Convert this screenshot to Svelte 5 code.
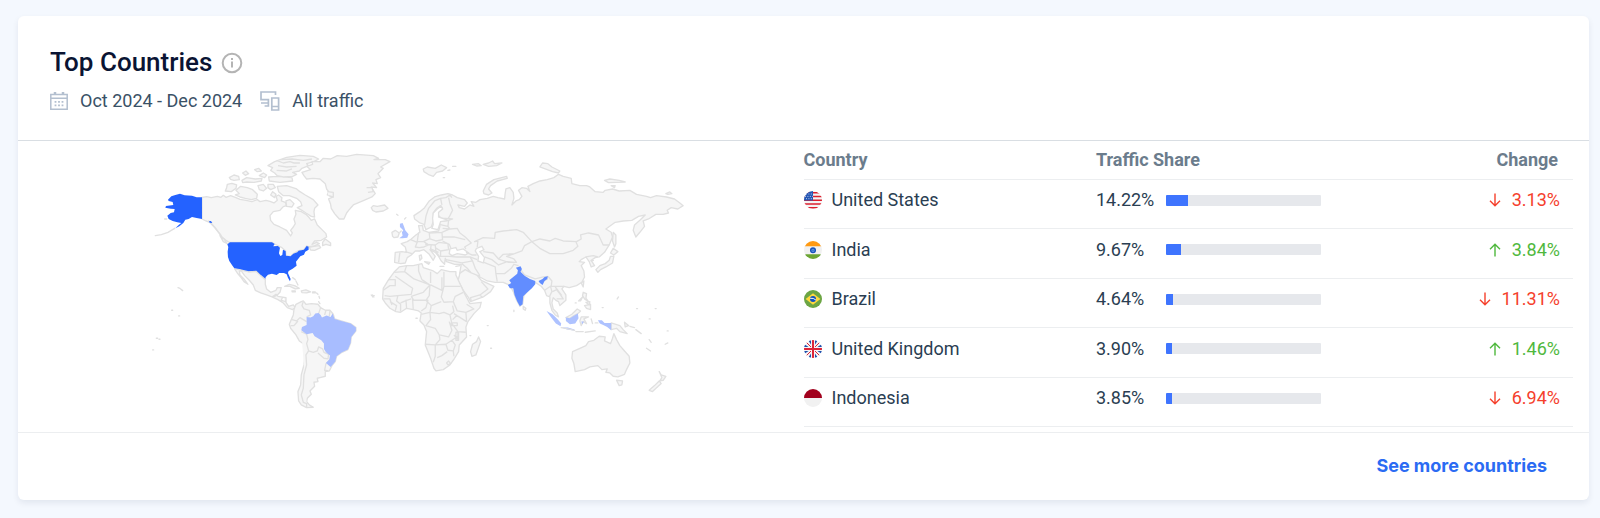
<script lang="ts">
  type Country = {
    code: string
    name: string
    share: number
    change: number
    isUp: boolean
  }

  let {
    period = 'Oct 2024 - Dec 2024',
    source = 'All traffic'
  }: {
    period?: string
    source?: string
  } = $props()

  const countries: Country[] = [
    { code: 'us', name: 'United States', share: 14.22, change: 3.13, isUp: false },
    { code: 'in', name: 'India', share: 9.67, change: 3.84, isUp: true },
    { code: 'br', name: 'Brazil', share: 4.64, change: 11.31, isUp: false },
    { code: 'gb', name: 'United Kingdom', share: 3.9, change: 1.46, isUp: true },
    { code: 'id', name: 'Indonesia', share: 3.85, change: 6.94, isUp: false }
  ]
</script>

{#snippet flag(code: string)}
  <svg class="flag" viewBox="0 0 18 18" aria-hidden="true">
    <g clip-path="url(#flag-clip)">
      {#if code === 'us'}
        <path fill="#f4f4f4" d="M0 0h18v18H0z" />
        <path stroke="#dc1f2e" stroke-width="1.5" d="M0 1.8h18M0 5.4h18M0 9.2h18M0 12.9h18M0 16.8h18" />
        <path fill="#2456b4" d="M0 0h9v9.5H0z" />
        <path stroke="#c9d8f2" stroke-width="0.9" stroke-dasharray="1 1.4" d="M2 3h7M1 5.4h8M2 7.7h7" />
      {:else if code === 'in'}
        <path fill="#f1f1f1" d="M0 0h18v18H0z" />
        <path fill="#ff9a13" d="M0 0h18v5.3H0z" />
        <path fill="#6ca534" d="M0 13.2h18V18H0z" />
        <circle cx="9" cy="9.2" r="2.3" fill="#6ba0e8" stroke="#1753bb" stroke-width="1.5" />
        <circle cx="9" cy="9.2" r="0.7" fill="#1753bb" />
      {:else if code === 'br'}
        <path fill="#6ca544" d="M0 0h18v18H0z" />
        <path fill="#ffd83d" d="M9 3.2 16.4 9 9 14.8 1.6 9z" />
        <circle cx="9" cy="9" r="3" fill="#0f52ba" />
        <path fill="none" stroke="#f4f4f4" d="M6.1 8.3q3.3-.6 5.8 1.7" />
      {:else if code === 'gb'}
        <path fill="#f4f4f4" d="M0 0h18v18H0z" />
        <path fill="#1d4fae" d="M4 0h3v4.6zM0 4v3h4.6zM11 0h3l-3 4.6zM18 4v3h-4.6zM0 11h4.6L0 14zM7 18H4l3-4.6zM18 11h-4.6l4.6 3zM11 18h3l-3-4.6z" />
        <path stroke="#dc2438" d="m2 2 5 5M16 2l-5 5M2 16l5-5M16 16l-5-5" />
        <path stroke="#dc2438" stroke-width="2" d="M9 0v18M0 9h18" />
      {:else}
        <path fill="#f1f1f1" d="M0 0h18v18H0z" />
        <path fill="#a2001d" d="M0 0h18v9H0z" />
      {/if}
    </g>
  </svg>
{/snippet}

<section class="card">
  <svg class="defs" aria-hidden="true">
    <clipPath id="flag-clip"><circle cx="9" cy="9" r="9" /></clipPath>
  </svg>

  <header class="card-header">
    <div class="title-row">
      <h2>Top Countries</h2>
      <button class="info" type="button" aria-label="About top countries">
        <svg viewBox="0 0 22 22" fill="none" stroke="#b4b4b4" stroke-width="2">
          <circle cx="11" cy="11" r="9.3" />
          <path d="M11 9.5v6M11 6v2" />
        </svg>
      </button>
    </div>
    <div class="meta">
      <svg class="meta-icon calendar" viewBox="0 0 18 18" fill="none" stroke="#b3bfcf" stroke-width="1.5">
        <path d="M.8 2.5h16.4v14.7H.8zM.8 6.2h16.4" />
        <path stroke-width="2.5" d="M5 0v3M13 0v3" />
        <path stroke-width="1.8" stroke-dasharray="1.8 1.7" d="M4.6 9.8h9M4.6 13.4h9" />
      </svg>
      <span>{period}</span>
      <svg class="meta-icon devices" viewBox="0 0 20 20" fill="none" stroke="#b3bfcf" stroke-width="1.7">
        <path d="M15.5 4V1H1v7.6h7.4V15H4.6M1 12h7.4" />
        <path d="M11.8 7h6.8v12h-6.8zM11.8 15.5h6.8" />
      </svg>
      <span>{source}</span>
    </div>
  </header>

  <div class="card-body">
    <div class="map-pane">
      <svg class="map" viewBox="0 0 1650 810" role="img" aria-label="World map of traffic share">
        <!-- North America -->
        <g>
          <path class="land" d="M186 157 200 155 214 158 232 154 243 157 250 151 258 157 272 152 288 158 300 163 318 166 336 170 352 164 360 170 378 166 390 169 402 174 412 166 408 154 416 150 426 158 424 168 436 172 440 182 430 185 420 196 400 200 390 212 392 226 402 238 420 246 440 256 452 273 457 264 452 256 460 246 466 236 462 222 468 208 466 196 484 200 498 208 506 216 514 226 524 222 532 240 546 254 558 266 560 276 544 286 524 288 516 298 530 292 538 296 524 303 506 305 500 303 492 314 476 317 460 326 452 334 438 332 437 318 426 308 404 297 396 292 268 292 258 286 246 276 236 262 224 246 212 234 198 228 186 222Z" />
          <path class="land" d="M262 118 276 115 290 120 288 130 274 140 256 138 260 128ZM288 136 302 124 322 128 338 134 352 148 350 160 334 164 316 160 300 156 286 150 298 146ZM412 124 440 122 470 132 480 140 496 150 520 164 534 180 524 190 522 200 524 216 514 214 498 204 486 196 472 188 486 182 482 170 470 160 448 152 430 152 416 140ZM384 62 404 50 440 37 480 31 520 34 536 42 522 50 500 56 506 62 486 70 478 78 458 82 470 88 458 94 430 96 412 92 404 84 392 76 398 68ZM386 96 410 94 456 98 458 108 420 112 388 108ZM268 98 282 90 296 94 298 104 282 106 272 103ZM308 84 318 78 326 86 316 91ZM344 74 356 70 364 78 352 80ZM306 106 320 98 346 102 366 100 364 108 342 112 320 111 308 113ZM358 92 370 84 380 90 374 98ZM354 122 370 118 380 130 370 138 358 134ZM384 118 400 118 406 128 392 134 384 128ZM392 150 398 140 408 148 404 158ZM438 168 450 164 462 176 456 186 440 184Z" />
          <path class="land" d="M410 46 430 54 450 50 462 54 480 54M414 62 440 66 470 64M410 76 440 78 456 72M424 44 456 42 490 46 516 42" />
          <path class="land" d="M486 82 512 74 500 64 518 58 516 50 540 50 550 40 572 42 592 32 620 34 650 28 700 32 716 40 702 44 736 44 750 50 722 66 730 70 714 86 722 98 708 104 712 116 698 114 710 128 694 126 706 146 696 156 672 166 640 180 626 196 620 204 612 222 598 222 584 206 574 190 572 178 566 162 580 156 562 150 566 140 560 132 556 116 540 102 520 100 500 102 492 92Z" />
          <path class="land" d="M562 140 580 142 580 156 566 152M680 128 696 128 700 140 684 142" />
          <path class="land" d="M694 188 700 182 712 184 734 180 744 190 730 198 708 201 698 196ZM548 292 556 282 572 294 572 302 558 298 548 302ZM508 307 522 304 538 302 542 308 524 316 512 315ZM240 272 252 282 262 296 250 290Z" />
          <path class="islands" d="M104 250 84 262 64 269 46 272M206 228l20 22 16 20M74 222h6" />
          <path class="us" d="M84 164 94 154 106 150 120 146 134 151 156 152 170 157 186 157 186 222 170 219 156 216 146 222 136 224 130 234 118 244 106 250 116 240 124 234 112 232 98 228 86 222 82 212 92 204 102 202 104 192 92 191 76 188 78 183 100 180 98 171 86 168ZM207 229 213 228 217 234 209 233Z" />
          <path class="us" d="M270 292H396L404 297 400 304 414 303 420 308 417 325 421 333 427 330 429 314 437 318 438 332 452 334 460 326 472 322 476 317 492 314 500 303 506 305 506 314 496 320 492 329 481 334 474 343 468 350 470 362 458 371 446 378 444 384 452 402 450 409 444 398 440 388 432 384 418 384 410 390 396 386 384 389 377 397 376 403 368 400 362 391 352 384 348 378 336 378 326 380 308 377 298 373 284 371 276 360 268 348 264 336 263 320 265 306 262 298Z" />
        </g>

        <!-- Central and South America -->
        <g transform="translate(0 390)">
          <path class="land" d="M284-18 298-16 326-9 348-11 362 2 376 14 376 28 380 42 392 52 408 46 412 38 424 38 420 52 412 60 404 64 396 66 380 60 362 54 346 46 340 30 328 16 314 2 304-12 298-12 300 0 312 12 324 28 312 20 302 6 292-6ZM396 66 408 58 414 64 438 68 438 82 446 94 460 90 466 98 458 104 442 98 430 84 414 74ZM428 66 424 76 438 80" />
          <path class="land" d="M434 34 448 28 464 32 478 40 466 42 450 34ZM484 48 498 45 512 51 500 54 486 53ZM456 48h10v3h-9ZM518 51h8v3h-8Z" />
          <path class="land" d="M468 88 484 80 490 78 498 88 514 86 534 88 542 98 556 106 570 106 580 118 584 132 604 138 632 146 648 158 648 168 634 186 632 204 624 224 606 232 590 244 586 260 576 272 568 288 556 290 556 304 540 308 532 310 534 320 522 322 524 334 510 348 514 358 502 370 500 380 508 390 520 397 500 398 484 390 476 378 474 350 482 330 484 300 492 270 496 236 496 210 478 198 468 180 452 160 448 148 454 134 460 120 462 104Z" />
          <path class="land" d="M490 80 486 92 492 102 508 106 512 120 500 126M542 98 538 110 536 116M558 106 554 120M570 108 568 124M456 134 470 138 480 128 500 140M452 152 462 152 474 138M484 170 500 178 504 194 500 206 506 228 498 240 500 270 492 300 490 340 484 360 490 382 500 386M506 228 520 232 532 228 536 216 548 222 552 232 566 238 564 252 552 250 534 234M570 254 558 266 554 286 566 288M500 384V396" />
          <path class="br" d="M500 126 512 128 520 124 526 116 536 114 542 120 546 128 560 122 572 126 578 116 584 132 604 138 632 146 648 158 648 168 634 186 632 204 624 224 606 232 590 244 586 260 572 276 558 264 568 254 570 242 558 232 552 222 552 206 544 196 524 184 518 174 500 178 484 166 486 156 500 150Z" />
          <path class="islands" d="M114 38l6 2M122 42l6 5M95 106h3M116 123h3M49 190h4M57 193h3M38 225h3M458 8l8 6M468 18l6 12M530 54l4 4M537 64l2 6M536 80l4 6M695 62h8M698 60v6" />
        </g>

        <!-- Europe and Asia -->
        <g transform="translate(690 0)">
          <path class="land" d="M134 222 132 212 150 200 164 188 178 168 194 156 214 150 234 146 248 150 262 158 284 164 292 174 284 184 264 180 268 188 284 192 300 180 312 184 304 170 318 172 330 164 352 160 370 154 384 158 404 162 406 144 408 132 420 128 430 142 432 160 426 180 438 168 448 164 456 154 446 136 456 128 470 130 480 140 474 124 490 116 510 108 532 104 552 98 566 88 580 94 604 100 606 116 630 122 650 122 660 126 676 140 700 142 706 136 728 132 748 138 780 136 800 148 830 154 842 158 860 152 890 156 914 162 930 174 940 182 924 192 904 188 892 196 896 204 880 208 858 208 836 222 820 228 824 244 810 262 798 276 790 256 794 240 810 226 826 210 806 214 786 226 760 228 736 232 708 252 724 262 728 276 718 300 704 322 688 336 676 338 664 346 674 362 664 366 658 350 648 336 634 344 628 350 644 352 634 362 642 378 644 396 636 412 620 422 598 428 582 424 576 432 588 450 588 466 570 482 566 470 558 466 550 458 546 474 550 492 562 504 566 516 556 510 546 496 540 474 540 456 530 452 524 436 514 424 508 420 496 412 480 430 462 452 458 478 450 484 440 466 430 440 424 428 414 418 400 412 376 412 352 408 330 396 322 392 334 406 350 414 372 424 362 440 340 456 302 470 296 458 280 436 264 406 268 394 274 358 254 358 230 350 226 340 224 358 214 348 206 334 196 322 180 314 196 334 190 346 178 328 162 314 150 318 136 318 124 330 112 338 106 354 92 356 74 352 76 322 96 320 110 322 106 306 94 296 112 290 124 282 138 270 150 262 146 242 158 242 160 256 176 262 206 258 210 244 208 230 236 226 248 222 228 220 214 220 204 210 206 200 218 190 212 182 200 190 190 204 192 224 184 246 168 254 162 238 150 234Z" />
          <path class="water" d="M188 220 190 204 202 192 214 184 218 192 206 202 206 216 222 222 236 226 212 230 204 254 186 250 190 238ZM238 326 240 312 258 308 262 316 280 312 296 324 286 330 262 326 246 332ZM320 310 336 304 342 314 330 320 344 338 340 354 324 348 326 334 316 318Z" />
          <path class="land" d="M340 138 350 118 372 104 410 94 412 100 382 108 362 122 356 132 366 144 356 150 342 146ZM160 72 172 66 196 70 214 60 230 68 218 78 200 82 190 94 178 90 162 80ZM308 58 326 56 334 62 320 63ZM340 58 356 54 368 48 374 56 396 54 380 62 356 64ZM510 66 518 54 534 56 546 66 570 78 566 84 548 80 532 74ZM704 106 720 102 748 106 766 111 740 112 716 113ZM888 146 900 141 906 146 894 148ZM68 274 66 262 76 256 88 264 84 276 72 278ZM724 122 736 122 734 128Z" />
          <path class="land" d="M678 374 690 362 706 356 718 346 722 334 732 334 728 354 708 366 692 374 684 382ZM722 324 730 310 744 320 732 330ZM730 262 738 270 738 296 734 306 728 288ZM148 332l6-2 2 10-6 6ZM164 350l16 2-4 6ZM634 414l8-6-2 18ZM460 484 468 490 466 496 460 492Z" />

          <!-- borders -->
          <path class="land-border" d="M164 240 168 214 176 190 194 168 212 160 216 180M212 160 228 158 240 150 246 158M236 158 240 176 248 196 240 212 234 222M246 156 236 150M236 226 234 244 240 252 262 250 270 264 286 276 304 294 284 306 288 312M208 238 234 244M218 250 240 252 216 262 178 264 180 282 198 288 218 284 216 262M218 276 252 276 286 284M146 262 142 290 160 290 178 282M122 284 142 292 136 306 148 308 162 306 176 300 162 290M106 320 126 326M166 298 196 300 208 292 234 296 236 314 212 318 196 308M196 300 198 320 208 334 238 334M212 318 212 336M184 298 182 312 206 322M90 322 86 352M218 288 238 298 244 312M288 322 306 330 320 330M238 334 260 336 300 336 308 348 276 354 228 344M300 336 322 344M308 348 316 370 330 392M276 356 292 370 304 384 330 394M268 386 286 374 304 384M304 470 302 458 330 450 354 432 334 410M338 458 330 450M322 306 324 288 314 290 340 278 374 280 376 262 400 258 440 254 460 262 486 290 464 302 456 318 434 326 400 328 386 342 370 324 340 320M486 290 510 282 540 288 556 280 580 288 620 290 634 282 632 270 656 264 686 270 700 300 718 300M486 290 510 310 540 326 580 326 610 316 624 304 618 290M434 326 410 334 432 342 440 352 416 352 384 342M344 336 366 344 386 360 412 350 434 352M342 352 376 366 378 386 382 410M378 386 404 386 424 370 432 358 446 362M446 366 464 390 496 402 520 396 534 394M534 394 546 408 544 424 560 424 582 424M510 412 534 402M524 436 542 424 546 440 538 456M548 440 560 434 572 450 580 462 560 462M556 426 564 436 576 452M648 336 670 332 684 336M662 348 672 346" />
          <path class="in" d="M438 368 452 364 456 372 452 380 464 392 480 402 496 408 496 418 486 430 470 444 460 454 458 478 450 484 442 470 434 450 430 430 420 430 414 420 424 414 418 406 430 396 442 386 444 376ZM506 408 518 402 524 396 534 394 532 402 524 408 518 420 510 414Z" />
          <path class="gb" d="M90 236 98 234 102 244 106 256 116 268 112 278 98 280 88 280 98 272 96 262 100 256 90 246Z" />
          <path class="islands" d="M80 208l4 3M104 222l4-4M234 76l6-1M248 64h10M220 98h4M90 262l4-4M210 364h12M258 364l12-2" />
        </g>

        <!-- Africa, South East Asia and Oceania -->
        <g transform="translate(690 390)">
          <path class="land" d="M72-8 88-24 110-28 130-28 156-34 160-22 190-12 202-4 214-16 240-10 258-10 258 0 272 30 284 56 300 86 334 82 330 98 312 116 294 140 288 156 290 186 268 210 266 230 254 250 240 270 220 284 198 288 192 280 182 250 166 210 170 170 162 150 150 138 154 114 146 108 130 104 110 100 92 112 78 110 60 100 46 84 38 72 40 40 56 14Z" />
          <path class="land-border" d="M72-8 104-10 110-28M56 14H76V32H60L40 46M76 4 128 40 124 58 84 62 60 64 44 62M104-10 132 12 180 30 160 52 124 64M146-30 146-12 156 14 180 30M182-10V24M182 30 216 46V8 38M222-10V34H272M222 34 214 66 222 82 250 80 256 64 280 52M180 30 178 62 168 76 184 92 214 80M40 72H60L66 90M84 62 80 78 92 88 92 110M60 80 80 92 76 108M108 74 110 100M128 72 130 104M124 64 132 76 174 76 168 98 154 108M92 84 110 76 124 72M184 92 180 112 154 118M180 112 208 116 222 112 240 120 252 110 248 92M250 80 262 108 288 112 312 102 290 88M240 120 246 146 264 170 288 172M288 112 290 140 252 116M262 120 248 134M180 112 182 134 168 152 196 160 208 180 236 186 246 166 238 140M166 208 196 210 210 194 208 180M196 210V244L190 262M196 210 228 208 246 196 264 184M228 208 234 226 250 228 256 210 246 196M202 248 216 242 232 230M250 228 252 244M264 170 264 192 252 180M244 144H262V152H244ZM258 172H266V196H258ZM230 264 236 258 242 266 234 270Z" />
          <path class="land" d="M326 186 332 200 318 240 306 244 302 230 308 208 320 200Z" />
          <path class="land" d="M608 230 630 220 648 212 656 200 672 196 688 184 706 186 704 198 722 206 728 190 732 176 740 194 750 212 764 228 778 244 780 264 770 284 764 298 744 306 730 304 720 294 708 292 712 282 696 284 684 272 660 276 644 284 616 290 612 266 606 250ZM740 316 758 318 756 330 748 332ZM868 290 874 300 888 304 880 316 870 318 876 308ZM868 318 874 326 856 342 848 350 838 346 854 332Z" />
          <path class="land" d="M588 128 606 118 622 102 632 108 624 116 612 122 600 130ZM640 52 650 56 648 70 656 80 644 72 638 62ZM644 92 662 88 662 104 650 100ZM648 82 660 80 658 90ZM724 144 750 152 760 164 772 176 750 170 740 160 724 164ZM634 126 656 126 642 132 650 146 640 140 634 152 630 138ZM764 142 776 152 766 156ZM626 78 638 66 632 78Z" />
          <path class="id" d="M530 108 548 118 564 134 574 146 572 154 558 146 544 128ZM588 128 600 130 616 120 624 116 626 130 616 146 600 148 588 138ZM684 136 696 136 704 144 724 144 724 166 712 156 700 150 690 146ZM574 158 594 158 614 164 612 167 592 164ZM634 140 642 140 638 148Z" />
          <path class="islands" d="M574 158 594 162 614 166M618 170h22M646 172l30-4M664 132l4 14M676 144h8M780 154l14 4M798 164l16 12M838 194l6 8M830 220l12 8M886 208l8-4M432 106v4M352 152h3M362 220h3M138 130h4M742 72l4-6M697 98h3M800 101h3M856 101h3M838 132h3M892 168h3M616 84h3M300 182h3M4 60l8 6" />
        </g>
      </svg>
    </div>

    <div class="table-pane">
      <table>
        <thead>
          <tr>
            <th class="col-country" scope="col">Country</th>
            <th class="col-share" scope="col">Traffic Share</th>
            <th class="col-change" scope="col">Change</th>
          </tr>
        </thead>
        <tbody>
          {#each countries as country (country.code)}
            <tr>
              <td>
                <div class="country">
                  {@render flag(country.code)}
                  <span>{country.name}</span>
                </div>
              </td>
              <td>
                <div class="share">
                  <span class="share-value">{country.share.toFixed(2)}%</span>
                  <div class="bar"><div class="bar-fill" style="width: {country.share}%"></div></div>
                </div>
              </td>
              <td>
                <div class="change" class:is-up={country.isUp}>
                  <svg class="arrow" viewBox="0 0 12 14" fill="none" stroke="currentColor" stroke-width="1.4">
                    {#if country.isUp}
                      <path d="M6 13.5V1.5M1 6.2 6 1.2l5 5" />
                    {:else}
                      <path d="M6 .5v12M1 7.8l5 5 5-5" />
                    {/if}
                  </svg>
                  <span>{country.change.toFixed(2)}%</span>
                </div>
              </td>
            </tr>
          {/each}
        </tbody>
      </table>
    </div>
  </div>

  <footer class="card-footer">
    <a href="#countries">See more countries</a>
  </footer>
</section>

<style>
  :global(body) {
    background: #f4f8fe;
  }

  .card {
    margin: 16px 11px 18px 18px;
    background: #fff;
    border-radius: 6px;
    box-shadow: 0 3px 6px rgba(14, 30, 62, 0.08);
    color: #2a3e52;
    font-family: Roboto, 'Liberation Sans', sans-serif;
    font-size: 18px;
    line-height: 24px;
  }

  .defs {
    position: absolute;
    width: 0;
    height: 0;
  }

  .card-header {
    padding: 30px 32px 27px;
    border-bottom: 1px solid #d9dee3;
  }

  .title-row {
    display: flex;
    align-items: center;
    gap: 9px;
  }

  h2 {
    margin: 0;
    color: #0a1433;
    font-size: 26px;
    font-weight: 500;
    line-height: 32px;
  }

  .info {
    display: flex;
    padding: 2px 0 0;
    border: none;
    background: none;
    cursor: pointer;
  }

  .info svg {
    width: 22px;
    height: 22px;
  }

  .meta {
    display: flex;
    align-items: center;
    margin-top: 11px;
    color: #3a5166;
  }

  .meta-icon {
    flex-shrink: 0;
  }

  .calendar {
    width: 18px;
    height: 18px;
    margin-right: 12px;
  }

  .devices {
    width: 20px;
    height: 20px;
    margin: 0 12px 0 18px;
  }

  .card-body {
    display: flex;
    border-bottom: 1px solid #eceef0;
  }

  .map-pane,
  .table-pane {
    box-sizing: border-box;
    width: 50%;
  }

  .map {
    display: block;
    width: 70%;
    margin: 4px auto 0 122px;
  }

  .land,
  .land-border {
    fill: #f6f6f6;
    stroke: #e0e0e0;
    stroke-width: 4;
    stroke-linejoin: round;
  }

  .land-border,
  .islands {
    fill: none;
  }

  .islands {
    stroke: #e0e0e0;
    stroke-width: 4;
    stroke-linecap: round;
  }

  .water {
    fill: #fff;
    stroke: #e0e0e0;
    stroke-width: 4;
  }

  .us {
    fill: #2462ff;
  }

  .in {
    fill: #628dff;
  }

  .br {
    fill: #a8bdff;
  }

  .gb,
  .id {
    fill: #aec2ff;
  }

  .table-pane {
    padding: 0 16px 5px 0;
  }

  table {
    width: 100%;
    border-collapse: collapse;
    table-layout: fixed;
  }

  th {
    height: 38px;
    padding: 0;
    border-bottom: 1px solid #eceef0;
    color: #6b7c8c;
    font-weight: 700;
    text-align: left;
  }

  td {
    height: 40px;
    padding: 0 0 8px;
    border-bottom: 1px solid #eceef0;
  }

  tr:nth-child(even) td {
    height: 41px;
  }

  .col-country {
    width: 38%;
  }

  .col-share {
    width: 32%;
  }

  .col-change {
    padding-right: 15px;
    text-align: right;
  }

  .country,
  .share,
  .change {
    display: flex;
    align-items: center;
  }

  .country {
    gap: 10px;
  }

  .flag {
    flex-shrink: 0;
    width: 18px;
    height: 18px;
  }

  .share-value {
    width: 70px;
  }

  .bar {
    width: 155px;
    height: 11px;
    border-radius: 1px;
    background: #e6e8ec;
    overflow: hidden;
  }

  .bar-fill {
    height: 100%;
    background: #3e74fe;
  }

  .change {
    justify-content: flex-end;
    gap: 11px;
    padding-right: 13px;
    color: #f5402c;
  }

  .change.is-up {
    color: #4fb83d;
  }

  .arrow {
    width: 12px;
    height: 14px;
  }

  .card-footer {
    display: flex;
    justify-content: flex-end;
    padding: 21px 42px 22px;
  }

  .card-footer a {
    color: #2b6bf3;
    font-family: Inter, 'Open Sans', sans-serif;
    font-weight: 700;
    text-decoration: none;
  }
</style>
